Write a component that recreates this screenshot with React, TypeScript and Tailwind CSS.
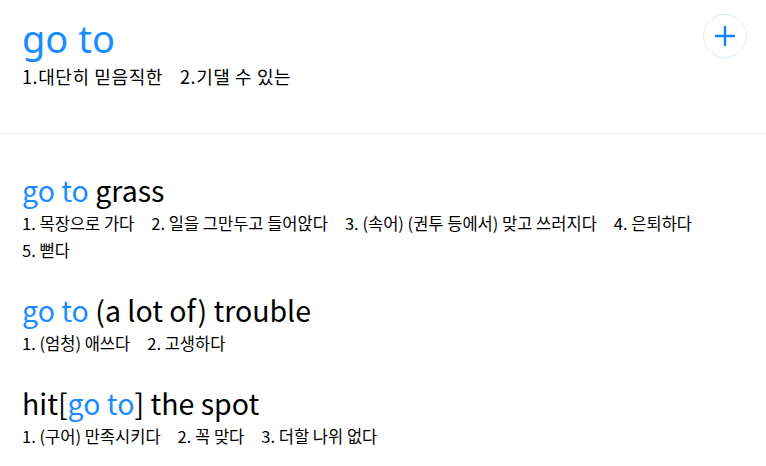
const font = { fontFamily: '"Noto Sans CJK KR", "Noto Sans", sans-serif' };

type Entry = {
  before?: string;
  after: string;
  bracket?: boolean;
  meanings: string[];
};

const entries: Entry[] = [
  {
    after: " grass",
    meanings: ["목장으로 가다", "일을 그만두고 들어앉다", "(속어) (권투 등에서) 맞고 쓰러지다", "은퇴하다", "뻗다"],
  },
  { after: " (a lot of) trouble", meanings: ["(엄청) 애쓰다", "고생하다"] },
  { before: "hit", bracket: true, after: " the spot", meanings: ["(구어) 만족시키다", "꼭 맞다", "더할 나위 없다"] },
];

function Phrase({ entry }: { entry: Entry }) {
  return (
    <div>
      <h3 className="text-[28.5px] leading-[40px] text-black">
        {entry.before}
        {entry.bracket && "["}
        <span className="text-[#1a8cff]">go to</span>
        {entry.bracket && "]"}
        {entry.after}
      </h3>
      <p className="text-[16.5px] leading-[27px] text-black">
        {entry.meanings.map((m, i) => (
          <span key={i} className="mr-[17px] inline-block">
            {i + 1}. {m}
          </span>
        ))}
      </p>
    </div>
  );
}

export default function App() {
  return (
    <div className="w-[766px] h-[466px] bg-white overflow-hidden" style={font}>
      <header className="flex items-start justify-between pl-[22px] pr-[19px] pt-[12px] h-[134px] border-b border-[#ebebeb]">
        <div>
          <h1 className="text-[38px] leading-[52px] text-[#1a8cff]" style={{ fontFamily: '"Noto Sans", sans-serif' }}>
            go to
          </h1>
          <p className="text-[18px] leading-[24px] tracking-[0.6px] text-black">
            <span className="mr-[17px]">1.대단히 믿음직한</span>
            <span>2.기댈 수 있는</span>
          </p>
        </div>
        <button className="mt-[2px] w-[44px] h-[44px] rounded-full border border-[#dcecfd] flex items-center justify-center">
          <svg width="22" height="22" viewBox="0 0 22 22">
            <path d="M11 1v20M1 11h20" stroke="#0a84ff" strokeWidth="2.4" />
          </svg>
        </button>
      </header>
      <main className="pl-[22px] pr-[50px] pt-[36px] flex flex-col gap-[26px]">
        {entries.map((e, i) => (
          <Phrase key={i} entry={e} />
        ))}
      </main>
    </div>
  );
}
